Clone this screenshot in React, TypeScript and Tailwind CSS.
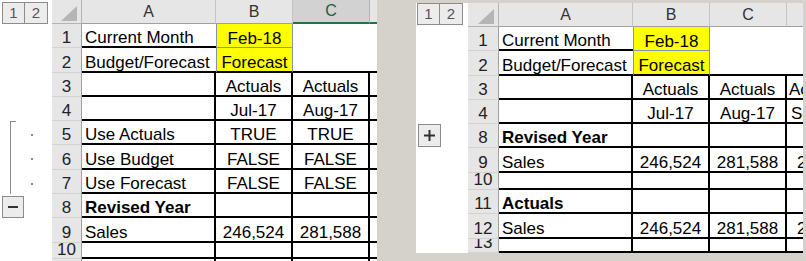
import React from 'react'

type Gut = 'none' | 'bracketTop' | 'bracket' | 'minus' | 'plus'

type Row = {
  n: string
  h: number
  a?: string
  b?: string
  c?: string
  d?: string
  dPad?: string
  bold?: boolean
  top?: 1 | 2
  gut?: Gut
  tight?: boolean
}

const font = "font-['Liberation_Sans',Arial,sans-serif]"

const leftRows: Row[] = [
  { n: '1', h: 24, a: 'Current Month', b: 'Feb-18', top: 1 },
  { n: '2', h: 25, a: 'Budget/Forecast', b: 'Forecast', top: 2 },
  { n: '3', h: 24, b: 'Actuals', c: 'Actuals' },
  { n: '4', h: 24, b: 'Jul-17', c: 'Aug-17' },
  { n: '5', h: 24, a: 'Use Actuals', b: 'TRUE', c: 'TRUE', gut: 'bracketTop' },
  { n: '6', h: 25, a: 'Use Budget', b: 'FALSE', c: 'FALSE', gut: 'bracket' },
  { n: '7', h: 24, a: 'Use Forecast', b: 'FALSE', c: 'FALSE', gut: 'bracket' },
  { n: '8', h: 24, a: 'Revised Year', bold: true, gut: 'minus' },
  { n: '9', h: 25, a: 'Sales', b: '246,524', c: '281,588' },
  { n: '10', h: 16, tight: true },
  { n: '11', h: 24 },
]

const rightRows: Row[] = [
  { n: '1', h: 24, a: 'Current Month', b: 'Feb-18', top: 1 },
  { n: '2', h: 25, a: 'Budget/Forecast', b: 'Forecast', top: 2 },
  { n: '3', h: 24, b: 'Actuals', c: 'Actuals', d: 'Actuals', dPad: 'pl-[2px]' },
  { n: '4', h: 24, b: 'Jul-17', c: 'Aug-17', d: 'Sep-17', dPad: 'pl-[4px]' },
  { n: '8', h: 24, a: 'Revised Year', bold: true, gut: 'plus' },
  { n: '9', h: 25, a: 'Sales', b: '246,524', c: '281,588', d: '2', dPad: 'pl-[10px]' },
  { n: '10', h: 17 },
  { n: '11', h: 24, a: 'Actuals', bold: true },
  { n: '12', h: 25, a: 'Sales', b: '246,524', c: '281,588', d: '2', dPad: 'pl-[10px]' },
  { n: '13', h: 14 },
]

function OutlineButtons() {
  return (
    <div className="flex">
      <div className="w-[23px] h-[22px] border border-[#8c8c8c] bg-[#ececec] flex items-center justify-center text-[15px] text-[#555]">1</div>
      <div className="w-[23px] h-[22px] border border-l-0 border-[#8c8c8c] bg-[#ececec] flex items-center justify-center text-[15px] text-[#555]">2</div>
    </div>
  )
}

function Gutter({ kind }: { kind?: Gut }) {
  if (kind === 'bracketTop' || kind === 'bracket') {
    return (
      <div className="w-[52px] shrink-0 flex items-center self-stretch">
        <div
          className={
            kind === 'bracketTop'
              ? 'ml-[10px] self-stretch w-[6px] border-l border-t border-[#8a8a8a]'
              : 'ml-[10px] self-stretch w-[6px] border-l border-[#8a8a8a]'
          }
        />
        <div className="ml-[15px] mt-[3px] w-[2px] h-[2px] bg-[#8a8a8a]" />
      </div>
    )
  }
  if (kind === 'minus') {
    return (
      <div className="w-[52px] shrink-0 self-stretch pt-[2px] pl-[2px]">
        <div className="w-[22px] h-[22px] border border-[#8c8c8c] bg-[#ececec] flex items-center justify-center">
          <div className="w-[10px] h-[2px] bg-[#333]" />
        </div>
      </div>
    )
  }
  if (kind === 'plus') {
    return (
      <div className="w-[52px] shrink-0 self-stretch pl-[2px]">
        <div className="w-[23px] h-[23px] border border-[#8c8c8c] bg-[#ececec] flex items-center justify-center">
          <svg width="11" height="11" viewBox="0 0 11 11">
            <rect x="0" y="4.5" width="11" height="2" fill="#333" />
            <rect x="4.5" y="0" width="2" height="11" fill="#333" />
          </svg>
        </div>
      </div>
    )
  }
  return <div className="w-[52px] shrink-0" />
}

function Panel({ rows, rh, dw, sel, btnPad }: { rows: Row[]; rh: string; dw: string; sel?: boolean; btnPad: string }) {
  // excel puts text on the bottom of the cell
  const txt = 'text-[17px] leading-none whitespace-nowrap overflow-hidden flex items-end'
  return (
    <div className={`bg-white ${font} text-black`}>
      {/* column headings */}
      <div className="flex h-[24px]">
        <div className={`w-[52px] shrink-0 ${btnPad}`}>
          <OutlineButtons />
        </div>
        <div className={`${rh} shrink-0 bg-[#e6e6e6] border-r border-b border-[#b4b4b4] flex items-end justify-end pr-[4px] pb-[2px]`}>
          <svg width="16" height="15" viewBox="0 0 16 15">
            <polygon points="16,0 16,15 0,15" fill="#b5b5b5" />
          </svg>
        </div>
        <div className="w-[134px] shrink-0 bg-[#e6e6e6] border-r border-b border-r-[#c4c4c4] border-b-[#a0a0a0] flex items-center justify-center text-[16px] text-[#333]">A</div>
        <div className="w-[77px] shrink-0 bg-[#e6e6e6] border-r border-b border-r-[#c4c4c4] border-b-[#a0a0a0] flex items-center justify-center text-[16px] text-[#333]">B</div>
        {sel ? (
          <div className="w-[77px] shrink-0 bg-[#d2d2d2] border-r border-r-[#b4b4b4] border-b-2 border-b-[#217346] flex items-center justify-center text-[16px] text-[#1d5e3c]">C</div>
        ) : (
          <div className="w-[77px] shrink-0 bg-[#e6e6e6] border-r border-b border-r-[#c4c4c4] border-b-[#a0a0a0] flex items-center justify-center text-[16px] text-[#333]">C</div>
        )}
        <div
          className={
            sel
              ? `${dw} shrink-0 bg-[#e6e6e6] border-b-2 border-b-[#217346]`
              : `${dw} shrink-0 bg-[#e6e6e6] border-b border-b-[#a0a0a0]`
          }
        />
      </div>

      {rows.map((r) => (
        <div key={r.n} className="flex" style={{ height: r.h }}>
          <Gutter kind={r.gut} />
          <div
            className={
              r.tight
                ? `${rh} shrink-0 bg-[#e6e6e6] border-r border-b border-r-[#a0a0a0] border-b-[#d2d2d2] justify-center pb-0 text-[#222] ${txt}`
                : `${rh} shrink-0 bg-[#e6e6e6] border-r border-b border-r-[#a0a0a0] border-b-[#d2d2d2] justify-center pb-[1px] text-[#222] ${txt}`
            }
          >
            {r.n}
          </div>
          <div
            className={
              r.top
                ? `w-[134px] shrink-0 border-b-2 border-black pl-[3px] ${txt}`
                : `w-[134px] shrink-0 border-b-2 border-r-2 border-black pl-[3px] ${txt}`
            }
          >
            <span className={r.bold ? 'font-bold' : ''}>{r.a}</span>
          </div>
          {r.top === 1 && (
            <div className={`w-[77px] shrink-0 bg-[#ffff00] border-l border-r border-b border-[#8792b0] justify-center ${txt}`}>{r.b}</div>
          )}
          {r.top === 2 && (
            <div className={`w-[77px] shrink-0 bg-[#ffff00] border-l border-r border-l-[#8792b0] border-r-[#8792b0] border-b-2 border-b-black justify-center ${txt}`}>{r.b}</div>
          )}
          {!r.top && (
            <div className={`w-[77px] shrink-0 border-b-2 border-r-2 border-black justify-center ${txt}`}>{r.b}</div>
          )}
          {r.top === 1 && <div className="w-[77px] shrink-0" />}
          {r.top === 2 && <div className="w-[77px] shrink-0 border-b-2 border-black" />}
          {!r.top && (
            <div className={`w-[77px] shrink-0 border-b-2 border-r-2 border-black justify-center ${txt}`}>{r.c}</div>
          )}
          {r.top === 1 ? (
            <div className={`${dw} shrink-0`} />
          ) : (
            <div className={`${dw} shrink-0 border-b-2 border-black ${r.dPad ?? ''} ${txt}`}>{r.d}</div>
          )}
        </div>
      ))}
    </div>
  )
}

export default function App() {
  return (
    <div className="w-[806px] h-[261px] bg-[#d5d2cc] flex overflow-hidden">
      <div className="w-[377px] h-[261px] shrink-0 overflow-hidden">
        <Panel rows={leftRows} rh="w-[30px]" dw="w-[7px]" sel btnPad="pt-[2px] pl-[2px]" />
      </div>
      <div className="ml-[39px] mt-[3px] w-[387px] h-[250px] shrink-0 overflow-hidden">
        <Panel rows={rightRows} rh="w-[31px]" dw="w-[16px]" btnPad="pl-[1px]" />
      </div>
    </div>
  )
}
